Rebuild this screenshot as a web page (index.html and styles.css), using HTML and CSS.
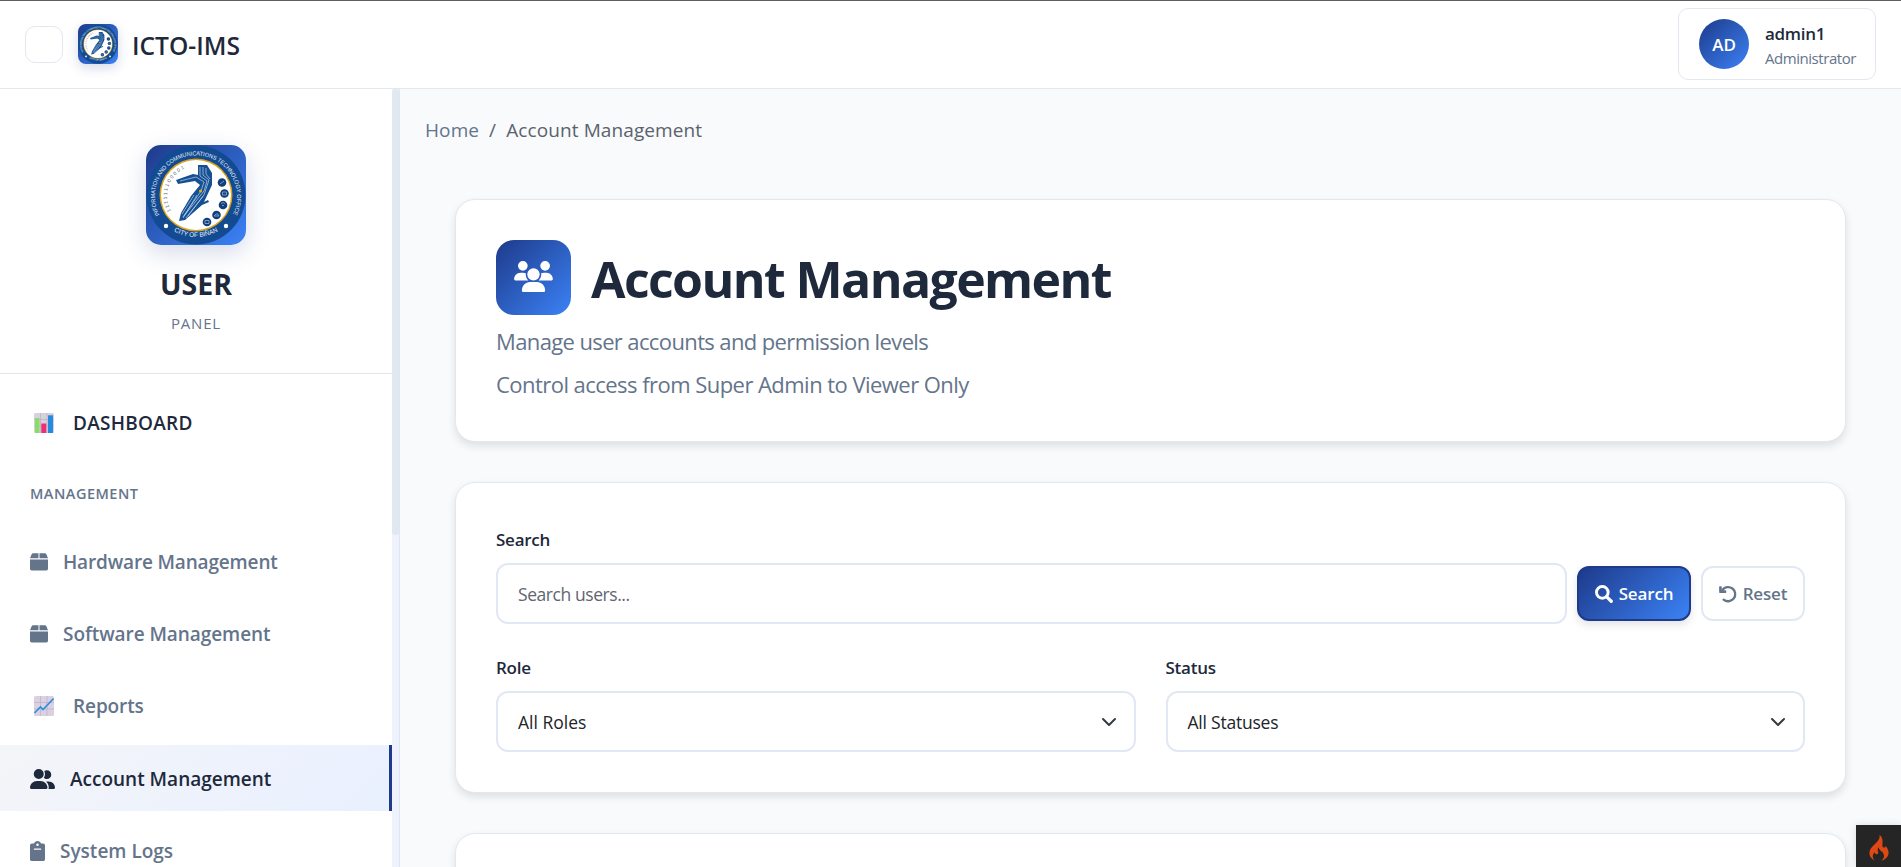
FILE: index.html
```html
<!DOCTYPE html>
<html lang="en">
<head>
<meta charset="utf-8">
<title>ICTO-IMS - Account Management</title>
<link rel="stylesheet" href="styles.css">
</head>
<body>
<svg class="defs" aria-hidden="true">
  <defs>
    <linearGradient id="seal-bg" x1="0" y1="0" x2="1" y2="1"><stop offset="0" stop-color="#1e3a8a"/><stop offset="1" stop-color="#3b82f6"/></linearGradient>
    <path id="arc-top" d="M13.5 70 A41 41 0 1 1 86.500 70"/>
    <path id="arc-bottom" d="M22 82 A44 44 0 0 0 78 82"/>
    <path id="arc-bits" d="M25 66 A30 30 0 0 1 43 22"/>
    <symbol id="seal" viewBox="0 0 100 100">
      <rect width="100" height="100" fill="url(#seal-bg)"/>
      <circle cx="50" cy="50" r="49.500" fill="#124b91"/>
      <circle cx="50" cy="50" r="36.500" fill="#d9a21c"/>
      <circle cx="50" cy="50" r="35" fill="#fff"/>
      <text class="seal-text"><textPath href="#arc-top" textLength="166" lengthAdjust="spacingAndGlyphs">INFORMATION AND COMMUNICATIONS TECHNOLOGY OFFICE</textPath></text>
      <text class="seal-text seal-text-city"><textPath href="#arc-bottom" startOffset="50%" text-anchor="middle" textLength="46" lengthAdjust="spacingAndGlyphs">CITY OF BIÑAN</textPath></text>
      <text class="seal-bits"><textPath href="#arc-bits" textLength="50">111111100001</textPath></text>
      <circle cx="20" cy="81" r="2.200" fill="#fff"/><circle cx="80" cy="81" r="2.200" fill="#fff"/>
      <path fill="#174f93" d="M30 35 47 29 52 30 52 20 61 20 66 28 66 40 58 57 62 55 63 57 56 60 39 75 33 76 35 68 45 51 54 40 49 36 32 39Z"/>
      <path fill="none" stroke="#b8d2ed" stroke-width=".7" d="M34 36 50 32 58 37 55 46 37 72M54 22v9l7 5-3 10-20 25M57 22v8l6 5-5 15-16 21M60 23v6l4 5M48 50 36 69M51 50 37 73M57 51 40 73"/>
      <circle cx="54.500" cy="46" r="1.500" fill="#e8ae22"/>
      <g fill="#123f7c"><circle cx="76" cy="37.500" r="4.300"/><circle cx="78.500" cy="48.500" r="4.300"/><circle cx="77" cy="60" r="4.300"/><circle cx="70.500" cy="70" r="4.300"/><circle cx="61" cy="77" r="4.300"/></g>
      <g fill="none" stroke="#8fb0d8" stroke-width=".8"><path d="m74 39 4-3M75 58.500q2-2 4 0M76 60.500h2M68 71h5q-1-3-3-2zM59 75.500h4v3h-4z"/><path d="M76.500 47h4v3h-4z"/></g>
    </symbol>
    <symbol id="box" viewBox="0 0 18 18"><path fill="currentColor" d="M0 5.300 1.500 1.400Q2 .3 3.200.3h5.300v5zM9.500.3h5.300q1.200 0 1.700 1.100L18 5.300H9.500zM0 6.400h18v9.300q0 1.700-1.700 1.700H1.700Q0 17.400 0 15.700z"/></symbol>
  </defs>
</svg>

<header class="topbar">
  <div class="brand">
    <button class="menu-toggle" aria-label="Toggle menu"></button>
    <svg class="brand-logo"><use href="#seal"/></svg>
    <span class="brand-name">ICTO-IMS</span>
  </div>
  <div class="profile">
    <div class="avatar">AD</div>
    <div class="profile-text"><div class="profile-name">admin1</div><div class="profile-role">Administrator</div></div>
  </div>
</header>

<div class="shell">
  <aside class="sidebar">
    <div class="sidebar-body">
      <div class="sidebar-head">
        <svg class="sidebar-logo"><use href="#seal"/></svg>
        <div class="panel-title">USER</div>
        <div class="panel-sub">PANEL</div>
      </div>
      <nav class="nav">
        <a class="nav-item nav-dashboard">
          <svg class="emoji" viewBox="0 0 20 20"><rect width="20" height="20" rx="1.500" fill="#d7d0df"/><path d="M0 6.500h20M0 13h20M6.500 0v20M13 0v20" stroke="#b9b0c3" stroke-width=".7"/><path fill="#8bdc65" d="M1 5h4.500v15H1z"/><path fill="#ed2f75" d="M7.300 10.500h5V20h-5z"/><path fill="#258bdd" d="M14 2.300h5V20h-5z"/></svg>
          <span class="t-dashboard">DASHBOARD</span>
        </a>
        <div class="nav-section">MANAGEMENT</div>
        <a class="nav-item"><svg class="ico-box"><use href="#box"/></svg><span class="t-hardware">Hardware Management</span></a>
        <a class="nav-item"><svg class="ico-box"><use href="#box"/></svg><span class="t-software">Software Management</span></a>
        <a class="nav-item nav-reports">
          <svg class="emoji" viewBox="0 0 20 20"><rect width="20" height="20" rx="1.500" fill="#dad1e3"/><path d="M0 6.500h20M0 13h20M6.500 0v20M13 0v20" stroke="#bbb0c8" stroke-width=".7"/><path fill="none" stroke="#2e91d6" stroke-width="1.600" d="M.5 17 6.500 11 9 13.500 19.500 2.500"/></svg>
          <span class="t-reports">Reports</span>
        </a>
        <a class="nav-item nav-low active">
          <svg class="ico-users" viewBox="0 0 640 512"><path fill="currentColor" d="M96 128a128 128 0 1 1 256 0 128 128 0 1 1-256 0M0 482.300C0 383.800 79.800 304 178.300 304h91.400c98.500 0 178.300 79.800 178.300 178.300 0 16.400-13.300 29.700-29.700 29.700H29.700C13.300 512 0 498.700 0 482.300M609.300 512H471.400c5.400-9.400 8.600-20.300 8.600-32v-8c0-60.700-27.100-115.200-69.800-151.800 2.400-.1 4.700-.2 7.100-.2h61.400c89.100 0 161.300 72.200 161.300 161.300 0 17-13.800 30.700-30.700 30.700M432 256c-31 0-59-12.600-79.300-32.900C372.400 196.500 384 163.600 384 128c0-26.800-6.600-52.100-18.300-74.300C384.300 40.100 407.200 32 432 32a112 112 0 1 1 0 224"/></svg>
          <span class="t-account">Account Management</span>
        </a>
        <a class="nav-item nav-low">
          <svg class="ico-clip" viewBox="0 0 384 512"><path fill="currentColor" fill-rule="evenodd" d="M192 0c-41.800 0-77.400 26.700-90.500 64H48C21.500 64 0 85.500 0 112v352c0 26.500 21.500 48 48 48h288c26.500 0 48-21.500 48-48V112c0-26.500-21.500-48-48-48h-53.500C269.400 26.700 233.800 0 192 0m0 64a32 32 0 1 1 0 64 32 32 0 1 1 0-64m-80 128h160a16 16 0 0 1 0 32H112a16 16 0 0 1 0-32"/></svg>
          <span class="t-logs">System Logs</span>
        </a>
      </nav>
    </div>
    <div class="scroll-track"><div class="scroll-thumb"></div></div>
  </aside>

  <main class="content">
    <nav class="crumbs"><span class="crumb-home">Home</span><span class="crumb-sep">/</span><span class="crumb-page">Account Management</span></nav>
    <section class="card hero">
      <div class="hero-title">
        <div class="hero-icon">
          <svg viewBox="0 0 640 512"><path fill="#fff" d="M144 0a80 80 0 1 1 0 160 80 80 0 1 1 0-160m368 0a80 80 0 1 1 0 160 80 80 0 1 1 0-160M0 298.700C0 239.800 47.800 192 106.700 192h42.700c15.900 0 31 3.500 44.600 9.700-1.300 7.200-1.900 14.700-1.900 22.300 0 38.200 16.800 72.500 43.300 96H21.300C9.600 320 0 310.400 0 298.700M405.300 320h-.7c26.600-23.500 43.300-57.800 43.300-96 0-7.600-.7-15-1.900-22.300 13.600-6.300 28.700-9.700 44.600-9.700h42.700c58.900 0 106.700 47.800 106.700 106.700 0 11.800-9.600 21.300-21.300 21.300z"/><path fill="#fff" stroke="#2c5bc0" stroke-width="16" paint-order="stroke" d="M218 220a102 102 0 1 1 204 0 102 102 0 1 1-204 0"/><path fill="#fff" d="M128 485.300C128 411.700 187.700 346 261.300 346h117.300c73.700 0 133.400 65.700 133.400 139.300 0 14.700-11.900 26.700-26.700 26.700H154.600c-14.700 0-26.600-11.900-26.600-26.700"/></svg>
        </div>
        <h1>Account Management</h1>
      </div>
      <p class="hero-p1">Manage user accounts and permission levels</p>
      <p class="hero-p2">Control access from Super Admin to Viewer Only</p>
    </section>

    <section class="card filters">
      <label class="lbl-search">Search</label>
      <div class="search-row">
        <div class="field field-search"><span class="placeholder">Search users...</span></div>
        <button class="btn btn-primary"><svg viewBox="0 0 512 512"><path fill="none" stroke="currentColor" stroke-width="84" d="M374 208a166 166 0 1 1-332 0 166 166 0 1 1 332 0"/><path stroke="currentColor" stroke-width="92" stroke-linecap="round" d="M335 335 462 462"/></svg><span>Search</span></button>
        <button class="btn btn-reset"><svg viewBox="0 0 512 512"><path fill="none" stroke="currentColor" stroke-width="66" stroke-linecap="round" d="M96 142A202 202 0 1 1 130 416"/><path fill="currentColor" d="M24 32h34q20 0 20 20v100h108q20 0 20 20v34q0 20-20 20H24q-20 0-20-20V52q0-20 20-20"/></svg><span>Reset</span></button>
      </div>
      <div class="select-row">
        <div class="select-group"><label class="lbl-role">Role</label><div class="field"><span class="v-roles">All Roles</span><svg class="chev" viewBox="0 0 16 16"><path fill="none" stroke="#343a40" stroke-linecap="round" stroke-linejoin="round" stroke-width="2" d="m2 5 6 6 6-6"/></svg></div></div>
        <div class="select-group"><label class="lbl-status">Status</label><div class="field"><span class="v-status">All Statuses</span><svg class="chev" viewBox="0 0 16 16"><path fill="none" stroke="#343a40" stroke-linecap="round" stroke-linejoin="round" stroke-width="2" d="m2 5 6 6 6-6"/></svg></div></div>
      </div>
    </section>

    <section class="card results"></section>
  </main>
</div>

<div class="debug-badge">
  <svg viewBox="0 0 20 26"><path fill="#dd4814" d="M10.500 0c.8 4-2 6.500-4.800 9.300C2.900 12.100.4 14.500.4 18c0 3.300 2 6.300 5.700 7.600-1.700-1.500-2.500-3-2.300-4.900.2-1.500 1-2.500 2-3.500.2 1.300.8 2.100 1.900 2.100 1.600-.1 1.800-1.500 1.300-2.900-.5-1.500-.4-3 .5-4.100.6 2.500 2 3 3.700 4.800 2.700 2.800 2.400 6.300-.8 8.500 4.400-1.200 7.300-4.300 7.200-8.200-.1-3-1.700-4.700-3-6.500-.3 1.200-.8 1.900-1.700 1.700-1.300-.2-1.800-1.500-1.500-3.400C13.900 5.500 13.500 2.100 10.500 0"/></svg>
</div>
</body>
</html>
```

FILE: styles.css
```css
* { box-sizing: border-box; }
body { margin: 0; height: 867px; overflow: hidden; background: #f8fafc; color: #1e293b; font-family: "Open Sans", "Noto Sans", sans-serif; font-size: 16px; }
.defs { position: absolute; width: 0; height: 0; }
span, h1, p, label { white-space: nowrap; }
button { font-family: inherit; }

.seal-text { fill: #e8f0fa; font-size: 5.800px; font-family: "Liberation Sans", sans-serif; }
.seal-text-city { font-size: 6.500px; }
.seal-bits { fill: #55606e; font-size: 5px; font-family: "Liberation Sans", sans-serif; }

.topbar { height: 89px; border-top: 1px solid #5e5e60; border-bottom: 1px solid #e2e8f0; background: #fff; display: flex; align-items: center; justify-content: space-between; padding: 0 25px 1px; }
.brand { display: flex; align-items: center; }
.menu-toggle { width: 38px; height: 37px; padding: 0; border: 1px solid #e2e8f0; border-radius: 10px; background: #fff; }
.brand-logo { width: 40px; height: 40px; margin-left: 15px; border-radius: 8px; box-shadow: 0 4px 12px rgba(30, 58, 138, .18); }
.brand-name { margin: 3px 0 0 14px; font-size: 24.600px; font-weight: 600; line-height: 34px; }
.profile { width: 198px; height: 72px; border: 1px solid #e2e8f0; border-radius: 10px; display: flex; align-items: center; padding-left: 20px; gap: 16px; }
.avatar { width: 50px; height: 50px; border-radius: 50%; background: linear-gradient(135deg, #1e3a8a, #3b82f6); color: #fff; font-size: 17px; font-weight: 600; display: flex; align-items: center; justify-content: center; }
.profile-name { margin-top: 3px; font-size: 17px; font-weight: 600; line-height: 24px; letter-spacing: -.3px; }
.profile-role { font-size: 15px; color: #64748b; line-height: 24px; letter-spacing: -.45px; }

.shell { display: flex; height: 778px; overflow: hidden; }
.sidebar { width: 400px; flex: none; display: flex; background: #fff; border-right: 1px solid #dfe6f1; }
.sidebar-body { width: 392px; overflow: hidden; }
.scroll-track { width: 7px; background: #edf2fd; }
.scroll-thumb { height: 446px; border-radius: 4px; background: #e0e8f0; }
.sidebar-head { height: 285px; border-bottom: 1px solid #e2e8f0; padding-top: 56px; display: flex; flex-direction: column; align-items: center; }
.sidebar-logo { width: 100px; height: 100px; border-radius: 15px; box-shadow: 0 8px 24px rgba(30, 58, 138, .18); flex: none; }
.panel-title { margin-top: 19px; font-size: 28.500px; font-weight: 700; line-height: 40px; }
.panel-sub { margin-top: 8px; font-size: 15px; letter-spacing: .8px; line-height: 22px; color: #64748b; }
.nav { padding-top: 16px; }
.nav-item { height: 66px; margin-bottom: 6px; display: flex; align-items: center; padding-left: 30px; font-size: 19px; font-weight: 600; color: #64748b; }
.nav-dashboard { margin-bottom: 0; color: #1e293b; }
.nav-dashboard, .nav-reports { padding-left: 34px; }
.nav-dashboard span, .nav-reports span { margin-left: 19px; }
.nav-low { padding-top: 2px; }
.t-dashboard { letter-spacing: .25px; }
.t-hardware { letter-spacing: -.16px; }
.t-software { letter-spacing: -.07px; }
.t-reports { letter-spacing: -.1px; }
.nav-section { height: 73px; padding: 27px 0 0 30px; font-size: 14.500px; font-weight: 600; letter-spacing: .5px; line-height: 22px; color: #64748b; }
.emoji { width: 20px; height: 20px; }
.ico-box { width: 18px; height: 18px; margin-right: 15px; }
.active { background: linear-gradient(135deg, #f4f5f8, #edf2fd 60%, #e9f0fe); border-right: 3px solid #1e3a8a; color: #1e293b; }
.ico-users { width: 25px; height: 20px; margin-right: 15px; }
.ico-clip { width: 15px; height: 20px; margin-right: 15px; }

.content { flex: 1; height: 778px; overflow: hidden; padding: 25px 55px 0; }
.crumbs { height: 32px; margin-left: -30px; display: flex; align-items: center; font-size: 19px; color: #5b626c; letter-spacing: .1px; }
.crumb-home { color: #64748b; }
.crumb-sep { margin: 0 10px; }
.card { background: #fff; border: 1px solid #e2e8f0; border-radius: 20px; box-shadow: 0 4px 9px rgba(0, 0, 0, .11); width: 1391px; }
.hero { height: 243px; margin-top: 53px; padding: 40px; }
.hero-title { display: flex; align-items: center; height: 75px; }
.hero-icon { width: 75px; height: 75px; border-radius: 18px; background: linear-gradient(135deg, #1e3a8a, #3b82f6); display: flex; align-items: center; justify-content: center; }
.hero-icon svg { width: 39px; height: 31px; margin-bottom: 2px; }
.hero h1 { margin: 2px 0 0 20px; font-size: 50px; font-weight: 700; line-height: 60px; letter-spacing: -1.600px; }
.hero p { margin: 0; font-size: 22px; line-height: 33px; color: #64748b; }
.hero .hero-p1 { margin-top: 10px; letter-spacing: -.62px; }
.hero .hero-p2 { margin-top: 10px; letter-spacing: -.54px; }

.filters { height: 311px; margin-top: 40px; padding: 43px 40px 0; }
.filters label { display: flex; align-items: center; height: 26px; margin-bottom: 11px; font-size: 17px; font-weight: 600; letter-spacing: -.25px; }
.search-row { display: flex; align-items: center; }
.field { height: 61px; border: 2px solid #e2e8f3; border-radius: 12px; display: flex; align-items: center; justify-content: space-between; padding: 0 17px 0 20px; font-size: 17.500px; color: #212529; background: #fff; }
.field-search { flex: 1; }
.placeholder { color: #5f6670; letter-spacing: -.43px; }
.v-status { letter-spacing: -.22px; }
.btn { height: 55px; border-radius: 12px; display: flex; align-items: center; justify-content: center; padding: 0; font-size: 17px; font-weight: 600; letter-spacing: -.15px; }
.btn svg { width: 18px; height: 18px; margin-right: 6px; }
.btn-primary { width: 114px; margin-left: 10px; border: 2px solid #1e3a8a; color: #fff; background: linear-gradient(135deg, #1e3a8a, #3b82f6); box-shadow: 0 4px 8px rgba(0, 0, 0, .11); }
.btn-reset { width: 104px; margin-left: 10px; border: 2px solid #e2e8f3; color: #64748b; background: #fff; }
.select-row { display: grid; grid-template-columns: 1fr 1fr; gap: 30px; margin-top: 30px; }
.chev { width: 16px; height: 16px; }
.results { height: 200px; margin-top: 40px; }

.debug-badge { position: absolute; right: 0; bottom: 0; width: 45px; height: 42px; background: #252525; box-shadow: 0 0 8px rgba(0, 0, 0, .12); display: flex; align-items: center; justify-content: center; }
.debug-badge svg { width: 20px; height: 26px; margin-top: 3px; }
```
